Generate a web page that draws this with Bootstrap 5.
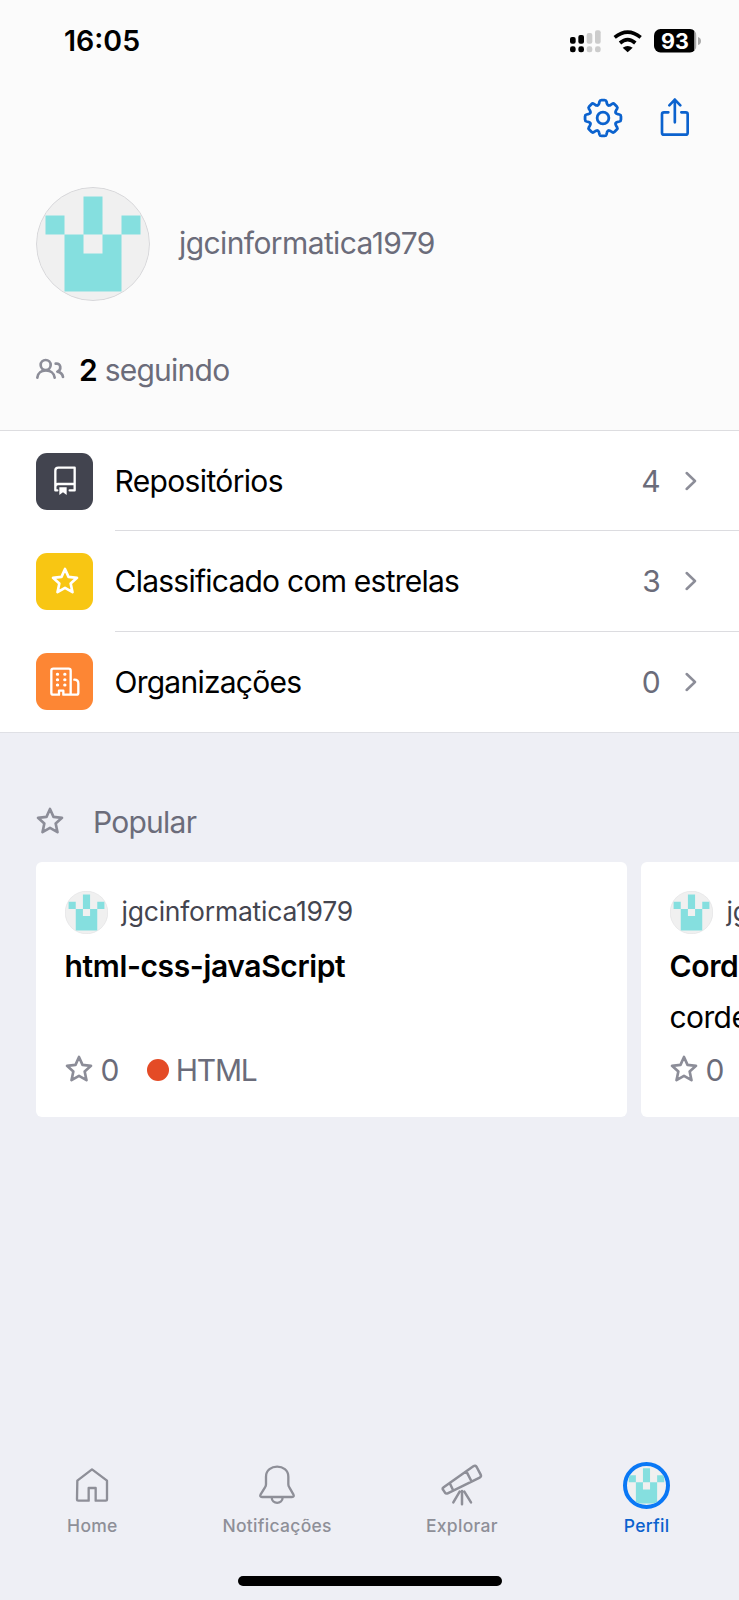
<!DOCTYPE html>
<html lang="pt-BR">
<head>
<meta charset="utf-8">
<meta name="viewport" content="width=device-width, initial-scale=1">
<title>Perfil</title>
<link href="https://cdn.jsdelivr.net/npm/bootstrap@5.3.0/dist/css/bootstrap.min.css" rel="stylesheet">
<style>
body{font-family:Inter,"Liberation Sans",sans-serif;font-size:30px;line-height:1.2;color:#000;background:#eeeff5;letter-spacing:-.6px}
.screen{height:1600px;overflow:hidden}
svg{display:block;flex:none}
.line-icon{fill:none;stroke-linecap:round;stroke-linejoin:round}
.muted{color:#6b6c7a}
.glyph{color:#8c8d98}
.top-area{height:431px;background:#fbfbfb;border-bottom:1px solid #dddde0}
.status{height:82px;padding:0 38.5px 0 64px}
.clock{font-size:28.5px;font-weight:600;letter-spacing:0}
.wifi{margin-left:12px}
.battery{margin-left:12px}
.actions{height:72px;padding-right:48px;gap:35px;color:#0b62ce}
.ident{border-radius:50%}
.who{margin-top:32.5px;padding-left:36px;gap:29px}
.who span{margin-top:-1px}
.stats{margin-top:29.5px;height:80px;padding-left:35px;gap:13px;letter-spacing:-.75px}
.menu-row{height:100.5px;padding-left:36px;gap:21.5px;letter-spacing:-.76px}
.menu-row:first-child{height:100px;letter-spacing:-.65px}
.tile{width:57px;height:57px;border-radius:11px}
.tile-repo{background:#42444f}
.tile-star{background:#f8c613;color:#fff}
.tile-org{background:#fd8634}
.menu-body{border-bottom:1px solid #dcdce0;padding-right:42px}
.menu-row:last-child{height:101px;border-bottom:1.5px solid #dfe0e5}
.menu-row:last-child .menu-body{border-bottom:0}
.menu-body .chev{margin-left:25px}
.section-head{height:78px;margin-top:50.5px;padding-left:36px;gap:29px;margin-bottom:.5px;letter-spacing:-.75px}
.section-head svg,.repo-meta svg{margin-top:-2px}
.repo-strip{padding-left:36px;gap:14.5px;overflow:hidden}
.repo{flex:0 0 590.5px;height:255.5px;border-radius:6px;background:#fff;padding:29px 28.5px 0;white-space:nowrap}
.repo-owner{font-size:26.5px;color:#44454f;gap:14px;height:43px;letter-spacing:-.22px}
.repo-title{font-weight:600;height:40px;line-height:40px;margin-top:12.5px;letter-spacing:-.36px}
.repo-desc{height:40px;line-height:40px;margin-top:10.5px}
.repo-meta{height:44px;margin-top:11.5px;gap:8px}
.lang-dot{width:22px;height:22px;border-radius:50%;background:#e44b26;margin-left:20px}
.lang{letter-spacing:-1.3px;margin-left:-1px}
.tabs{height:129px;padding-top:9.5px}
.tab{font-size:17.5px;font-weight:500;color:#8e8f98;letter-spacing:.3px}
.tab .pic{height:57px}
.tab .cap{line-height:22px;margin-top:1px}
.tab.on{color:#0b62ce}
.ring{width:47px;height:47px;border:4px solid #0a78f5;border-radius:50%;background:#f0f0f0;overflow:hidden}
.home-bar{width:264px;height:9.5px;border-radius:5px;background:#000;margin-bottom:14.5px}
</style>
<script src="https://cdn.jsdelivr.net/npm/bootstrap@5.3.0/dist/js/bootstrap.bundle.min.js"></script>
</head>
<body>
<svg width="0" height="0" class="position-absolute">
  <symbol id="pix" viewBox="0 0 12 12"><path fill="#85dfdf" d="M5 1h2v4H5zM1 3h2v2H1zM9 3h2v2H9zM3 5h2v2h2V5h2v6H3z"/></symbol>
  <symbol id="avatar" viewBox="0 0 12 12"><circle cx="6" cy="6" r="6" fill="#f0f0f0"/><use href="#pix"/><circle cx="6" cy="6" r="5.950" fill="none" stroke="#d6d6d9" stroke-width=".1"/></symbol>
  <symbol id="star" viewBox="0 0 84 84"><path fill="none" stroke="currentColor" stroke-width="8" stroke-linejoin="round" d="M42 6 52.500 29.500 78 32.500 59 49.500 64.500 75.500 42 62.500 19.500 75.500 25 49.500 6 32.500 31.500 29.500Z"/></symbol>
  <symbol id="chevron" viewBox="0 0 36 60"><path fill="none" stroke="#8c8d98" stroke-width="7.500" stroke-linecap="round" stroke-linejoin="round" d="M5 6 30 30 5 54"/></symbol>
  <path id="tooth" d="M-3.020 -7.300Q-2.300 -7.600 -2.200 -8.400L-2 -9.400Q-1.800 -10.250 -.9 -10.250H.9Q1.800 -10.250 2 -9.400L2.200 -8.400Q2.300 -7.600 3.020 -7.300"/>
</svg>
<main class="screen d-flex flex-column">
  <header class="top-area">
    <div class="status d-flex align-items-center">
      <span class="clock me-auto">16:05</span>
      <svg width="31" height="23" viewBox="0 0 93 69"><g><rect x="0" y="21" width="17" height="20" rx="6"/><rect x="25" y="15" width="17" height="26" rx="6"/><rect x="0" y="49" width="17" height="18" rx="7"/><rect x="25" y="49" width="17" height="18" rx="7"/></g><g fill="#ccc"><rect x="50" y="9" width="17" height="32" rx="6"/><rect x="75" y="1" width="17" height="40" rx="6"/><rect x="50" y="49" width="17" height="18" rx="7"/><rect x="75" y="49" width="17" height="18" rx="7"/></g></svg>
      <svg class="wifi" width="29" height="23" viewBox="220 86 87 69"><path fill="none" stroke="#000" stroke-width="11" d="M225 108Q264 77 303 108M241 125Q264 105 287 125"/><path d="M249 139Q264 129 279 139L264 153Z"/></svg>
      <svg class="battery" width="47" height="24" viewBox="0 0 47 24"><defs><clipPath id="cell"><rect width="42.500" height="23.500" rx="6.500"/></clipPath></defs><g clip-path="url(#cell)"><rect width="40.500" height="24"/><rect x="40.500" width="2" height="24" fill="#aaa"/></g><path d="M44 8q3 1 3 4t-3 4z" fill="#aaa"/><text x="21" y="19.500" text-anchor="middle" fill="#fff" font-size="21.500" font-weight="700" letter-spacing="0">93</text></svg>
    </div>
    <div class="actions d-flex align-items-center justify-content-end">
      <svg class="line-icon" width="42" height="42" viewBox="-12 -12 24 24" stroke="currentColor" stroke-width="1.600"><circle r="3.350"/><use href="#tooth"/><use href="#tooth" transform="rotate(45)"/><use href="#tooth" transform="rotate(90)"/><use href="#tooth" transform="rotate(135)"/><use href="#tooth" transform="rotate(180)"/><use href="#tooth" transform="rotate(225)"/><use href="#tooth" transform="rotate(270)"/><use href="#tooth" transform="rotate(315)"/></svg>
      <svg class="line-icon" width="32" height="42" viewBox="356 291 96 126" stroke="currentColor" stroke-width="8"><path d="M384 337H371Q365 337 365 343V398Q365 404 371 404H436Q442 404 442 398V343Q442 337 436 337H423M403.500 367V299M387 316 403.500 299 420 316"/></svg>
    </div>
    <div class="who d-flex align-items-center muted">
      <svg class="ident" width="114" height="114"><use href="#avatar"/></svg>
      <span>jgcinformatica1979</span>
    </div>
    <div class="stats d-flex align-items-center muted">
      <svg class="line-icon" width="31" height="24" viewBox="104 563 93 72" stroke="#8c8d98" stroke-width="8"><circle cx="136" cy="584" r="15"/><path d="M111 622C113 593 160 593 163 622M166 580C183 577 184 600 171 604Q186 607 188 620"/></svg>
      <span><b class="fw-semibold text-black">2</b> seguindo</span>
    </div>
  </header>

  <section class="bg-white">
    <div class="menu-row d-flex align-items-center">
      <div class="tile tile-repo d-flex align-items-center justify-content-center"><svg class="line-icon" width="30" height="30" viewBox="149 138 90 90" stroke="#fff" stroke-width="7"><path d="M171 211H165V152Q165 143 174 143H223V211H208M165 200Q165 192 173 192H223"/><path fill="#fff" stroke="none" d="M177 202H199V225L188 217 177 225Z"/></svg></div>
      <div class="menu-body d-flex align-items-center flex-grow-1 h-100"><span class="me-auto">Repositórios</span><span class="muted">4</span><svg class="chev" width="12" height="20"><use href="#chevron"/></svg></div>
    </div>
    <div class="menu-row d-flex align-items-center">
      <div class="tile tile-star d-flex align-items-center justify-content-center"><svg width="28" height="28"><use href="#star"/></svg></div>
      <div class="menu-body d-flex align-items-center flex-grow-1 h-100"><span class="me-auto">Classificado com estrelas</span><span class="muted">3</span><svg class="chev" width="12" height="20"><use href="#chevron"/></svg></div>
    </div>
    <div class="menu-row d-flex align-items-center">
      <div class="tile tile-org d-flex align-items-center justify-content-center"><svg class="line-icon" width="30" height="30" viewBox="149 742 90 90" stroke="#fff" stroke-width="7"><path d="M176 825H159Q153 825 153 819V753Q153 747 159 747H205Q211 747 211 753V825H189V813H176ZM211 825H228Q234 825 234 819V791Q234 780 222 780"/><path stroke-width="9" d="M171 764h1M193 764h1M171 780h1M193 780h1M171 796h1M193 796h1"/></svg></div>
      <div class="menu-body d-flex align-items-center flex-grow-1 h-100"><span class="me-auto">Organizações</span><span class="muted">0</span><svg class="chev" width="12" height="20"><use href="#chevron"/></svg></div>
    </div>
  </section>

  <div class="section-head d-flex align-items-center muted">
    <svg class="glyph" width="28" height="28"><use href="#star"/></svg><span>Popular</span>
  </div>
  <section class="repo-strip d-flex">
    <article class="repo">
      <div class="repo-owner d-flex align-items-center"><svg width="43" height="43"><use href="#avatar"/></svg><span>jgcinformatica1979</span></div>
      <div class="repo-title">html-css-javaScript</div>
      <div class="repo-desc"></div>
      <div class="repo-meta d-flex align-items-center muted"><svg class="glyph" width="28" height="28"><use href="#star"/></svg><span>0</span><span class="lang-dot"></span><span class="lang">HTML</span></div>
    </article>
    <article class="repo">
      <div class="repo-owner d-flex align-items-center"><svg width="43" height="43"><use href="#avatar"/></svg><span>jgcinformatica1979</span></div>
      <div class="repo-title">Cordel</div>
      <div class="repo-desc">cordel</div>
      <div class="repo-meta d-flex align-items-center muted"><svg class="glyph" width="28" height="28"><use href="#star"/></svg><span>0</span></div>
    </article>
  </section>

  <nav class="tabs row g-0 mt-auto text-center flex-nowrap">
    <div class="tab col-3"><div class="pic d-flex align-items-center justify-content-center"><svg class="line-icon" width="38" height="38" viewBox="220 78 114 114" stroke="currentColor" stroke-width="7"><path d="M233 122 277 88 322 122V178Q322 182 318 182H288V144H267V182H236Q232 182 232 178Z"/></svg></div><div class="cap">Home</div></div>
    <div class="tab col-3"><div class="pic d-flex align-items-center justify-content-center"><svg class="line-icon" width="38" height="40" viewBox="775 75 114 120" stroke="currentColor" stroke-width="7"><path d="M799 110C799 70 866 70 866 110V133Q866 138 869 142L881 163Q885 171 877 171H787Q779 171 783 163L796 142Q799 138 799 133ZM816 172C816 194 849 194 849 172"/></svg></div><div class="cap">Notificações</div></div>
    <div class="tab col-3"><div class="pic d-flex align-items-center justify-content-center"><svg class="line-icon" width="42" height="42" viewBox="212 76 126 126" stroke="currentColor" stroke-width="7.500"><path d="M220 146 309 83Q315 79 319 85L331 108Q334 114 328 117L232 164Q227 166 224 162L218 153Q215 149 220 146ZM288 98 303 127M238 133 248 154M275 157V197M268 159 249 191M282 159 302 191"/></svg></div><div class="cap">Explorar</div></div>
    <div class="tab on col-3"><div class="pic d-flex align-items-center justify-content-center"><div class="ring"><svg width="39" height="39" viewBox=".5 .4 11 11"><path fill="#85dfdf" d="M5 1h2v4H5zM1 3h2v2H1zM9 3h2v2H9zM3 5h2v2h2V5h2v6H3z"/></svg></div></div><div class="cap">Perfil</div></div>
  </nav>
  <div class="home-bar align-self-center flex-shrink-0"></div>
</main>
</body>
</html>
